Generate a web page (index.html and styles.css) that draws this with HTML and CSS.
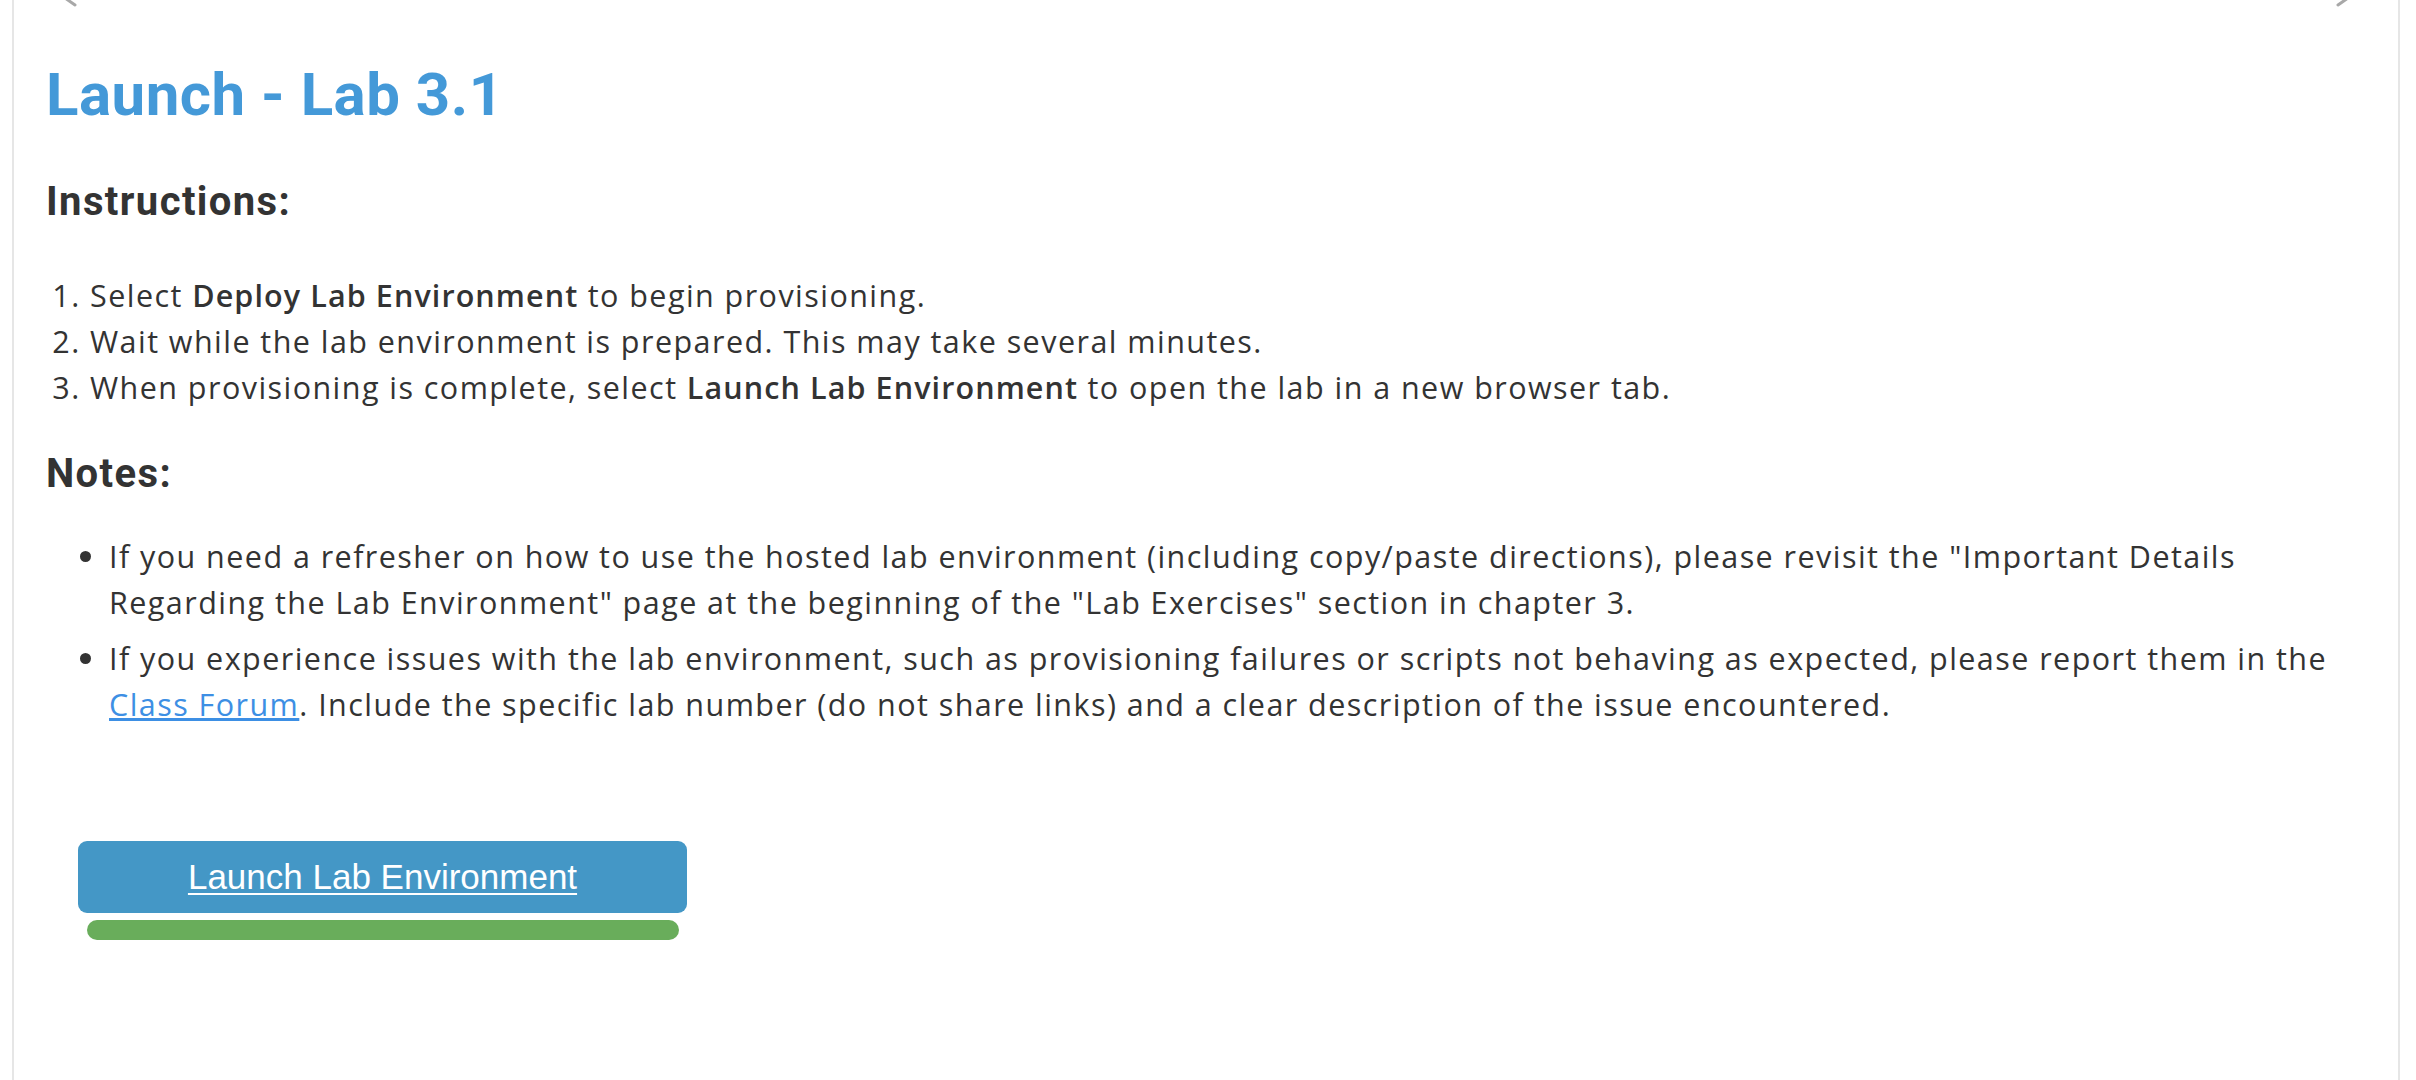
FILE: index.html
```html
<!DOCTYPE html>
<html lang="en">
<head>
<meta charset="utf-8">
<title>Launch - Lab 3.1</title>
<link rel="stylesheet" href="styles.css">
</head>
<body>
<div class="frame">
  <div class="nav">
    <svg class="chev" width="30" height="36" viewBox="0 0 30 36"><polyline points="24,4 4,18 24,32" fill="none" stroke="#a8a8a8" stroke-width="3" stroke-linecap="round" stroke-linejoin="round"/></svg>
    <svg class="chev" width="30" height="36" viewBox="0 0 30 36"><polyline points="6,4 26,18 6,32" fill="none" stroke="#a8a8a8" stroke-width="3" stroke-linecap="round" stroke-linejoin="round"/></svg>
  </div>
  <h1 class="title">Launch - Lab 3.1</h1>
  <h2 class="section-head">Instructions:</h2>
  <ol class="steps">
    <li>Select <strong>Deploy Lab Environment</strong> to begin provisioning.</li>
    <li>Wait while the lab environment is prepared. This may take several minutes.</li>
    <li>When provisioning is complete, select <strong>Launch Lab Environment</strong> to open the lab in a new browser tab.</li>
  </ol>
  <h2 class="section-head notes-head">Notes:</h2>
  <ul class="notes">
    <li>If you need a refresher on how to use the hosted lab environment (including copy/paste directions), please revisit the "Important Details Regarding the Lab Environment" page at the beginning of the "Lab Exercises" section in chapter 3.</li>
    <li>If you experience issues with the lab environment, such as provisioning failures or scripts not behaving as expected, please report them in the <a href="#" class="forum">Class Forum</a>. Include the specific lab number (do not share links) and a clear description of the issue encountered.</li>
  </ul>
  <div class="launch">
    <a href="#" class="launch-btn">Launch Lab Environment</a>
    <div class="progress"></div>
  </div>
</div>
</body>
</html>
```

FILE: styles.css
```css
html, body {
  margin: 0;
  padding: 0;
  overflow: hidden;
  background: #ffffff;
}

.frame {
  display: flow-root;
  margin: 0 16px 0 12px;
  border-left: 2px solid #e6e6e6;
  border-right: 2px solid #e6e6e6;
  padding: 0 32px;
  min-height: 1200px;
  color: #333333;
  font-family: "Open Sans", "Noto Sans", sans-serif;
}

.nav {
  display: flex;
  justify-content: space-between;
  height: 36px;
  margin: -27px 4px 0 5px;
}

.chev {
  display: block;
}

.title {
  margin: 50px 0 0 0;
  font-family: Roboto, "Liberation Sans", sans-serif;
  font-weight: 700;
  font-size: 60px;
  line-height: 72px;
  letter-spacing: 0.5px;
  color: #4499d8;
}

.section-head {
  margin: 47px 0 0 0;
  font-family: Roboto, "Liberation Sans", sans-serif;
  font-weight: 700;
  font-size: 40px;
  line-height: 48px;
  letter-spacing: 1.4px;
  color: #333333;
}

.notes-head {
  margin-top: 40px;
}

.steps {
  margin: 46px 0 0 0;
  padding-left: 44px;
  font-size: 30.5px;
  line-height: 46px;
  letter-spacing: 1.45px;
}

.steps strong {
  font-weight: 600;
  letter-spacing: 1.1px;
}

.notes {
  margin: 35px 0 0 0;
  padding-left: 63px;
  font-size: 30.5px;
  line-height: 46px;
  letter-spacing: 1.45px;
}

.notes li {
  margin-bottom: 10px;
}

.forum {
  color: #3d8fe4;
  text-decoration: underline;
  white-space: nowrap;
}

.launch {
  width: 609px;
  margin: 114px 0 0 32px;
}

.launch-btn {
  display: flex;
  align-items: center;
  justify-content: center;
  height: 72px;
  border-radius: 9px;
  background: #4497c6;
  color: #ffffff;
  font-family: "Liberation Sans", Arial, sans-serif;
  font-size: 35px;
  text-decoration: underline;
  text-decoration-thickness: 2px;
  text-underline-offset: 4px;
}

.progress {
  height: 20px;
  margin: 7px 8px 0 9px;
  border-radius: 10px;
  background: #69ad5b;
}
```
